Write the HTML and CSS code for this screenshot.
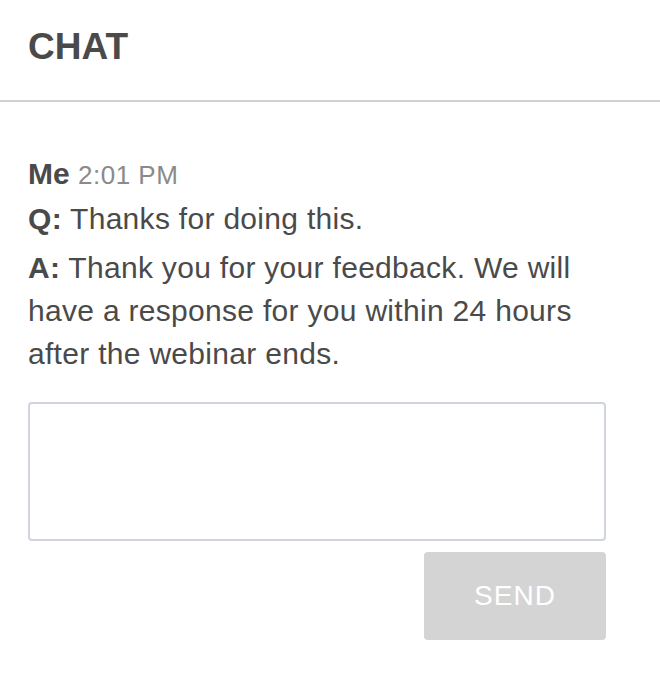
FILE: index.html
```html
<!DOCTYPE html>
<html>
<head>
<meta charset="utf-8">
<link rel="stylesheet" href="styles.css">
</head>
<body>
<div class="chat">
  <header class="chat-header"><h1 class="chat-title">CHAT</h1></header>
  <section class="chat-body">
    <div class="msg">
      <div class="msg-meta"><span class="msg-author">Me</span> <span class="msg-time">2:01 PM</span></div>
      <p class="msg-line msg-q"><b>Q:</b> Thanks for doing this.</p>
      <p class="msg-line msg-a"><b>A:</b> Thank you for your feedback. We will have a response for you within 24 hours after the webinar ends.</p>
    </div>
    <textarea class="chat-input"></textarea>
    <div class="actions"><button class="send-btn">SEND</button></div>
  </section>
</div>
</body>
</html>
```
FILE: styles.css
```css
html, body { margin: 0; padding: 0; background: #fff; }
body { font-family: "Liberation Sans", Arial, sans-serif; color: #4a4a4a; }
.chat { width: 660px; }
.chat-header { height: 102px; border-bottom: 2px solid #d0d0d0; box-sizing: border-box; padding: 27px 28px 0; }
.chat-title { margin: 0; font-size: 37px; font-weight: bold; line-height: 40px; color: #4a4a4a; }
.chat-body { padding: 54px 54px 0 28px; }
.msg-meta { font-size: 30px; line-height: 36px; }
.msg-author { font-weight: bold; }
.msg-time { color: #8a8a8a; font-size: 26px; letter-spacing: 0.5px; }
.msg-line { margin: 0; font-size: 30px; line-height: 43px; letter-spacing: 0.3px; }
.msg-q { margin-top: 4px; }
.msg-a { margin-top: 6px; }
.msg-line b { font-weight: bold; }
.chat-input { display: block; box-sizing: border-box; width: 578px; height: 139px; margin-top: 27px; border: 2px solid #d0d4db; border-radius: 4px; resize: none; outline: none; }
.actions { display: flex; justify-content: flex-end; width: 578px; margin-top: 11px; }
.send-btn { width: 182px; height: 88px; border: 0; border-radius: 4px; background: #d4d4d4; color: #fff; font-family: "Liberation Sans", Arial, sans-serif; font-size: 28px; letter-spacing: 1px; }
```
